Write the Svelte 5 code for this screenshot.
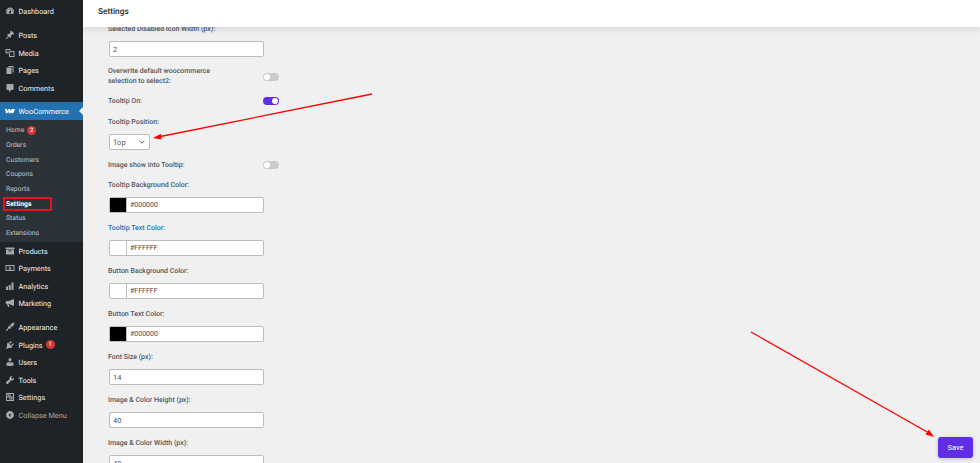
<script lang="ts">
  const icons = {
    dashboard: "M3.76 16h12.48c1.1-1.37 1.76-3.11 1.76-5 0-4.42-3.58-8-8-8s-8 3.58-8 8c0 1.89.66 3.63 1.76 5zM10 4c.55 0 1 .45 1 1s-.45 1-1 1-1-.45-1-1 .45-1 1-1zM6 6c.55 0 1 .45 1 1s-.45 1-1 1-1-.45-1-1 .45-1 1-1zm8 0c.55 0 1 .45 1 1s-.45 1-1 1-1-.45-1-1 .45-1 1-1zm-5.37 5.55L12 7v6c0 1.1-.9 2-2 2s-2-.9-2-2c0-.57.24-1.08.63-1.45zM4 10c.55 0 1 .45 1 1s-.45 1-1 1-1-.45-1-1 .45-1 1-1zm12 0c.55 0 1 .45 1 1s-.45 1-1 1-1-.45-1-1 .45-1 1-1z",
    pin: "M10.44 3.02l1.82-1.82 6.36 6.35-1.83 1.82c-1.05-.68-2.48-.57-3.41.36l-.75.75c-.92.93-1.04 2.35-.35 3.41l-1.83 1.82-2.41-2.41-2.8 2.79c-.42.42-3.38 2.71-3.8 2.29s1.86-3.39 2.28-3.81l2.79-2.79L4.1 9.36l1.83-1.82c1.05.69 2.48.57 3.4-.36l.75-.75c.93-.92 1.05-2.35.36-3.41z",
    media: "M1 2h10v9H1V2zm2 2v5h6V4H3zm9 2h7v12H8v-6h2v4h7V8h-5V6zM4 8l1.500-2L7 7.500 8 7v1H4z",
    pages: "M7 2h10v13h-2V4H7V2zM3 5h10v13H3V5z",
    comments: "M5 2h10c1.1 0 2 .9 2 2v8c0 1.1-.9 2-2 2h-3l-4 5v-5H5c-1.1 0-2-.9-2-2V4c0-1.1.9-2 2-2z",
    products: "M1 3h18v3H1V3zm1 4h16v10H2V7zm5 2v2h6V9H7z",
    payments: "M1 4h18v12H1V4zm2 2v8h14V6H3zm8 .8v1h1.5v1.4H9.5v.7h3v3.3H11v1H9v-1H7.5v-1.4h3v-.7h-3V7.8H9v-1h2z",
    analytics: "M2 11h4v7H2v-7zm5.5-3h4v10h-4V8zM13 3h4v15h-4V3z",
    marketing: "M18 3v12l-2 .5L8 12H7l2 6H6l-2-6c-1.700-.2-3-1.400-3-3.200C1 7 2.600 6 4.400 6H8l8-3.500 2 .5z",
    appearance: "M19 1c0 0-.5 4-2.500 6.500L14 10l-4-4 2.500-2.500C15 1.500 19 1 19 1zM9 7l4 4-1.500 1.500C10 14 8 13.500 7.500 13L4 18H1.500L6 11.500C5.500 11 6 9 7.500 8.500z",
    plugins: "M13.110 4.360L9.870 7.600 8 5.730l3.240-3.240c.350-.340 1.050-.200 1.560.320.520.510.660 1.210.310 1.550zm-8 1.770l.910-1.120 9.010 9.010-1.190.840c-.710.710-2.630 1.160-3.820 1.160H6.140L4.900 17.260c-.590.590-1.540.590-2.120 0a1.500 1.500 0 0 1 0-2.120l1.240-1.240v-3.880c0-1.130.350-3.170 1.090-3.890zm7.260 3.970l3.240-3.240c.340-.350 1.040-.210 1.550.310.520.510.660 1.210.310 1.550l-3.240 3.250z",
    users: "M10 9.250c-2.270 0-2.730-3.440-2.730-3.440C7 4.020 7.820 2 9.970 2c2.160 0 2.980 2.020 2.710 3.810 0 0-.410 3.440-2.680 3.440zm0 2.570L12.720 10c2.390 0 4.520 2.330 4.520 4.530v2.490s-3.650 1.130-7.240 1.130c-3.650 0-7.240-1.130-7.240-1.130v-2.490c0-2.250 1.940-4.480 4.470-4.480z",
    tools: "M16.680 9.770c-1.340 1.340-3.300 1.670-4.950.990l-5.410 6.520c-.990.990-2.590.990-3.580 0s-.990-2.590 0-3.570l6.520-5.420c-.680-1.650-.350-3.610.990-4.950 1.280-1.280 3.120-1.620 4.720-1.060l-2.890 2.890 2.820 2.820 2.860-2.870c.530 1.580.180 3.390-1.080 4.650z",
    settings: "M2 2h16v16H2V2zm2 2v5h5V4H4zm7 0v5h5V4h-5zM4 11v5h5v-5H4zm7 0v5h5v-5h-5zM5 5h3v3H5V5zm7 7h3v3h-3v-3z",
    collapse: "M10 2.160c4.330 0 7.840 3.510 7.840 7.840s-3.510 7.840-7.840 7.840-7.840-3.510-7.840-7.840S5.670 2.160 10 2.160zM11 6l-4 4 4 4V6z"
  };

  const topGroup = [{ label: "Dashboard", icon: icons.dashboard }];
  const contentGroup = [
    { label: "Posts", icon: icons.pin },
    { label: "Media", icon: icons.media },
    { label: "Pages", icon: icons.pages },
    { label: "Comments", icon: icons.comments }
  ];
  const subItems = [
    { label: "Home", badge: "2" },
    { label: "Orders" },
    { label: "Customers" },
    { label: "Coupons" },
    { label: "Reports" },
    { label: "Settings", current: true },
    { label: "Status" },
    { label: "Extensions" }
  ];
  const shopGroup = [
    { label: "Products", icon: icons.products },
    { label: "Payments", icon: icons.payments },
    { label: "Analytics", icon: icons.analytics },
    { label: "Marketing", icon: icons.marketing }
  ];
  const adminGroup = [
    { label: "Appearance", icon: icons.appearance },
    { label: "Plugins", icon: icons.plugins, badge: "1" },
    { label: "Users", icon: icons.users },
    { label: "Tools", icon: icons.tools },
    { label: "Settings", icon: icons.settings }
  ];
  const colorFields = [
    { label: "Tooltip Background Color:", value: "#000000", swatch: "#000", hover: false },
    { label: "Tooltip Text Color:", value: "#FFFFFF", swatch: "#fff", hover: true },
    { label: "Button Background Color:", value: "#FFFFFF", swatch: "#fff", hover: false },
    { label: "Button Text Color:", value: "#000000", swatch: "#000", hover: false }
  ];
  const numberFields = [
    { label: "Font Size (px):", value: "14" },
    { label: "Image & Color Height (px):", value: "40" },
    { label: "Image & Color Width (px):", value: "40" }
  ];
</script>

{#snippet menuRow(item)}
  <a class="menu-row" href="#top">
    <svg class="menu-icon" viewBox="0 0 20 20"><path d={item.icon} fill-rule="evenodd" /></svg>
    <span class="menu-text">{item.label}</span>
    {#if item.badge}<span class="badge">{item.badge}</span>{/if}
  </a>
{/snippet}

<div class="page">
  <aside class="sidebar">
    <div class="group first">
      {#each topGroup as item}{@render menuRow(item)}{/each}
    </div>
    <div class="group posts">
      {#each contentGroup as item}{@render menuRow(item)}{/each}
    </div>
    <div class="group woo">
      <a class="menu-row active" href="#top">
        <svg class="woo-logo" viewBox="0 0 24 12"><path d="M0 1h5l1 5.500L9 1h3.500l1 5.500L16 1h8l-2.500 6.500C20.500 10 19 11.500 17.500 11.500c-1.500 0-3-1-3.500-2.500L12.500 11.500H9L8.500 6 5.500 11.500H2.500z" /></svg>
        <span class="menu-text">WooCommerce</span>
      </a>
      <div class="submenu">
        {#each subItems as sub}
          <a class="sub-row" class:current={sub.current} href="#top">
            {sub.label}
            {#if sub.badge}<span class="badge">{sub.badge}</span>{/if}
          </a>
        {/each}
      </div>
    </div>
    <div class="group">
      {#each shopGroup as item}{@render menuRow(item)}{/each}
    </div>
    <div class="group admin">
      {#each adminGroup as item}{@render menuRow(item)}{/each}
      <a class="menu-row collapse" href="#top">
        <svg class="menu-icon" viewBox="0 0 20 20"><path d={icons.collapse} fill-rule="evenodd" /></svg>
        <span class="menu-text">Collapse Menu</span>
      </a>
    </div>
  </aside>

  <main class="main">
    <header class="topbar">Settings</header>
    <form class="form">
      <div class="field">
        <span class="label">Selected Disabled Icon Width (px):</span>
        <input class="input" value="2" />
      </div>
      <div class="toggle-row">
        <span class="label two-line">Overwrite default woocommerce selection to select2:</span>
        <span class="toggle"></span>
      </div>
      <div class="toggle-row">
        <span class="label">Tooltip On:</span>
        <span class="toggle on"></span>
      </div>
      <div class="field position">
        <span class="label">Tooltip Position:</span>
        <div class="select">
          <span>Top</span>
          <svg viewBox="0 0 10 6"><path d="M1 1l4 4 4-4" /></svg>
        </div>
      </div>
      <div class="toggle-row">
        <span class="label">Image show into Tooltip:</span>
        <span class="toggle"></span>
      </div>
      {#each colorFields as field}
        <div class="field">
          <span class="label" class:hover={field.hover}>{field.label}</span>
          <div class="color-input">
            <span class="swatch" style="background: {field.swatch}"></span>
            <span class="color-value">{field.value}</span>
          </div>
        </div>
      {/each}
      {#each numberFields as field}
        <div class="field">
          <span class="label">{field.label}</span>
          <input class="input" value={field.value} />
        </div>
      {/each}
    </form>
  </main>

  <button class="save" type="button">Save</button>
  <span class="highlight"></span>

  <svg class="arrows" viewBox="0 0 980 463">
    <line x1="372" y1="94" x2="158" y2="137" />
    <path d="M153 138L161 133.800L161.500 139.500Z" />
    <line x1="751" y1="332" x2="929" y2="433" />
    <path d="M934 437L925.500 434.500L929 429.500Z" />
  </svg>
</div>

<style>
  :global(body) {
    margin: 0;
    background: #f0f0f1;
  }

  .page {
    position: relative;
    display: flex;
    height: 100vh;
    overflow: hidden;
    font-family: Roboto, "Liberation Sans", sans-serif;
    font-size: 7.5px;
    text-rendering: geometricPrecision;
  }

  a {
    text-decoration: none;
    color: inherit;
  }

  .sidebar {
    flex: none;
    width: 83px;
    background: #1d2327;
    color: #f0f0f1;
  }

  .group.first {
    margin-top: 2.200px;
  }

  .group.posts {
    margin-top: 6.400px;
  }

  .group.woo {
    margin-top: 5.400px;
  }

  .group.admin {
    margin-top: 6px;
  }

  .menu-row {
    position: relative;
    display: flex;
    align-items: center;
    height: 17.600px;
    padding-left: 5px;
    box-sizing: border-box;
    white-space: nowrap;
    font-size: 7.300px;
  }

  .menu-text {
    padding-top: 1px;
  }

  .menu-icon {
    flex: none;
    width: 10px;
    height: 10px;
    margin-right: 3.500px;
    fill: #a7aaad;
  }

  .menu-row.active {
    background: #2271b1;
    color: #fff;
  }

  .menu-row.active::after {
    content: "";
    position: absolute;
    right: 0;
    top: 5px;
    border: 4px solid transparent;
    border-right-color: #f0f0f1;
    border-left-width: 0;
  }

  .woo-logo {
    flex: none;
    width: 10px;
    height: 6px;
    margin-right: 3.500px;
    fill: #fff;
  }

  .menu-row.collapse {
    color: #a7aaad;
  }

  .submenu {
    background: #2c3338;
    padding: 3px 0 2px;
    color: #c3c4c7;
  }

  .sub-row {
    display: flex;
    align-items: center;
    box-sizing: border-box;
    height: 14.670px;
    padding: 1px 0 0 6px;
    font-size: 6.800px;
  }

  .sub-row.current {
    color: #fff;
    font-weight: 700;
  }

  .badge {
    display: inline-block;
    width: 9px;
    height: 9px;
    margin-left: 3px;
    border-radius: 50%;
    background: #d63638;
    color: #fff;
    font-size: 6px;
    line-height: 9px;
    text-align: center;
  }

  .main {
    flex: 1;
    min-width: 0;
    color: #50575e;
  }

  .topbar {
    position: relative;
    z-index: 1;
    height: 27px;
    padding-left: 15px;
    line-height: 24px;
    background: #fff;
    color: #1d2327;
    font-size: 8.300px;
    font-weight: 500;
    box-shadow: 0 2px 8px rgba(0, 0, 0, 0.12);
  }

  .form {
    display: flex;
    flex-direction: column;
    gap: 10px;
    margin-top: -3px;
    padding-left: 25px;
  }

  .field {
    display: flex;
    flex-direction: column;
    align-items: flex-start;
    gap: 7px;
  }

  .field.position {
    margin-top: 1px;
  }

  .label {
    font-size: 7px;
    font-weight: 500;
    line-height: 10px;
    color: #50575e;
  }

  .label.hover {
    color: #2271b1;
  }

  .label.two-line {
    width: 118px;
    line-height: 9.500px;
  }

  .input,
  .color-input {
    box-sizing: border-box;
    width: 155px;
    height: 16px;
    margin: 0 0 0 1px;
    border: 1px solid #bdbdbd;
    border-radius: 2px;
    background: #fff;
    color: #50575e;
    font: 400 7.500px Roboto, sans-serif;
  }

  .input {
    padding: 0 3px;
  }

  .color-input {
    display: flex;
    align-items: center;
  }

  .swatch {
    flex: none;
    width: 17px;
    height: 100%;
    border-right: 1px solid #bdbdbd;
    box-sizing: border-box;
  }

  .color-value {
    padding-left: 3px;
    font-size: 7px;
    color: #3c434a;
  }

  .toggle-row {
    display: flex;
    align-items: center;
    justify-content: space-between;
    width: 171px;
  }

  .toggle {
    position: relative;
    width: 16px;
    height: 8px;
    border-radius: 4px;
    background: #ccc;
  }

  .toggle::after {
    content: "";
    position: absolute;
    left: 1px;
    top: 1px;
    width: 6px;
    height: 6px;
    border-radius: 50%;
    background: #fff;
  }

  .toggle.on {
    background: #5f2ee5;
  }

  .toggle.on::after {
    left: 9px;
  }

  .select {
    display: flex;
    align-items: center;
    justify-content: space-between;
    box-sizing: border-box;
    width: 41px;
    height: 16px;
    margin-left: 1px;
    padding: 0 4px 0 3px;
    border: 1px solid #bdbdbd;
    border-radius: 2px;
    background: #fff;
    font-size: 7.500px;
  }

  .select svg {
    width: 6px;
    height: 4px;
    fill: none;
    stroke: #3c434a;
    stroke-width: 1.500;
  }

  .save {
    position: absolute;
    left: 938px;
    top: 437px;
    width: 35px;
    height: 21px;
    padding: 0;
    border: 0;
    border-radius: 3px;
    background: #5f2ee5;
    color: #fff;
    font: 400 7.500px Roboto, sans-serif;
    box-shadow: 0 1px 4px rgba(0, 0, 0, 0.2);
  }

  .highlight {
    position: absolute;
    left: 3px;
    top: 197px;
    width: 49px;
    height: 14px;
    box-sizing: border-box;
    border: 2px solid #e8121c;
  }

  .arrows {
    position: absolute;
    inset: 0;
    width: 980px;
    height: 463px;
    fill: #f00;
    stroke: none;
    pointer-events: none;
  }

  .arrows line {
    stroke: #f00;
    stroke-width: 1.300;
  }
</style>
